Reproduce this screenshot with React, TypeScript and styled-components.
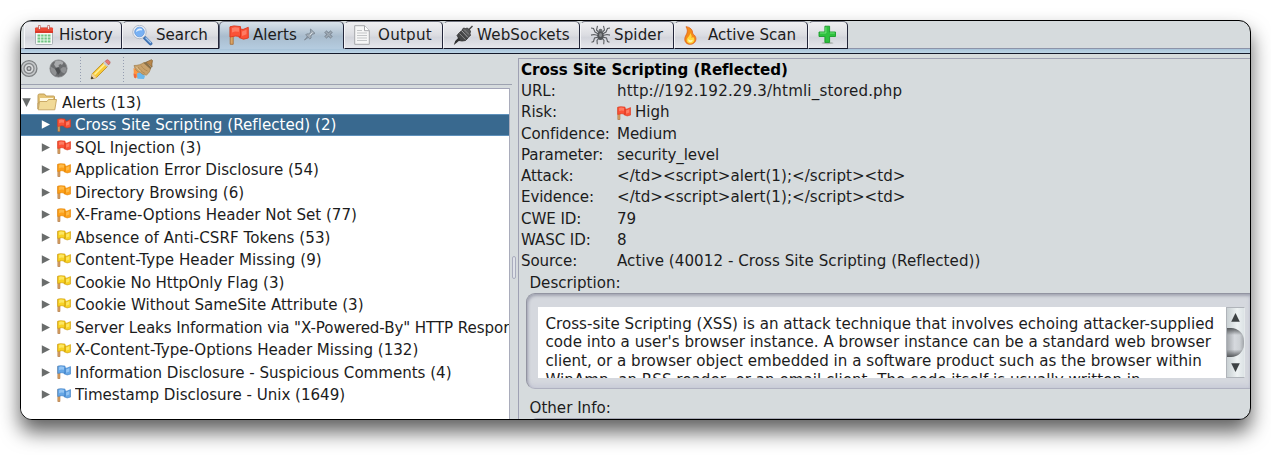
import React from 'react';
import styled, { createGlobalStyle } from 'styled-components';

const Global = createGlobalStyle`
  * { box-sizing: border-box; }
  body { margin: 0; background: #fff; overflow: hidden; }
`;

const Page = styled.div`
  width: 1271px;
  height: 455px;
  padding: 20px;
  overflow: hidden;
  font-family: "DejaVu Sans", sans-serif;
  font-size: 15.1px;
  color: #1c1c1c;
  white-space: nowrap;
`;
const Window = styled.div`
  width: 1231px;
  height: 400px;
  border: 1px solid #000;
  border-radius: 12px;
  overflow: hidden;
  background: #d6dbdd;
  display: flex;
  flex-direction: column;
  box-shadow: 0 12px 20px rgba(0, 0, 0, 0.62);
`;
const TabBar = styled.div`
  height: 28px;
  flex: none;
  display: flex;
  padding-left: 3px;
  border-bottom: 1px solid #8d93a8;
`;
const Tab = styled.div<{ $w: number; $active?: boolean; $spacing?: number }>`
  width: ${p => p.$w}px;
  height: 28px;
  flex: none;
  display: flex;
  align-items: center;
  padding: 0 0 0 9px;
  letter-spacing: ${p => p.$spacing ?? 0}px;
  border: 1px solid #23263a;
  border-top-color: #70737f;
  border-left-color: ${p => (p.$active ? '#5c6478' : '#f4f5f8')};
  border-bottom-color: ${p => (p.$active ? '#b4cbdf' : '#15182a')};
  border-radius: 5px 5px 0 0;
  background: ${p => (p.$active
    ? 'linear-gradient(#d9e2ea, #a9bccd 55%, #b4cbdf)'
    : 'linear-gradient(#efeff1, #dcdde2 50%, #d3d5dc 60%, #e6e7ec)')};
`;
const TabIcon = styled.span<{ $w: number }>`
  width: ${p => p.$w}px;
  height: 22px;
  flex: none;
  display: flex;
  align-items: center;
`;
const Strip = styled.div`
  height: 5px;
  flex: none;
  background: linear-gradient(#a7c3d9, #bdd5e6);
  border-bottom: 1px solid #14192a;
`;
const Body = styled.div`
  flex: 1;
  min-height: 0;
  display: flex;
`;
const Left = styled.div`
  width: 491px;
  flex: none;
  display: flex;
  flex-direction: column;
`;
const Toolbar = styled.div`
  height: 31px;
  flex: none;
  display: flex;
  align-items: center;
  border-bottom: 1px solid #9da2b0;
`;
const Tool = styled.span<{ $ml: number }>`
  margin-left: ${p => p.$ml}px;
  height: 20px;
  display: flex;
`;
const Dots = styled.span<{ $ml: number }>`
  margin-left: ${p => p.$ml}px;
  width: 1px;
  height: 25px;
  background: repeating-linear-gradient(#959db0 0 1px, transparent 1px 3px);
`;
const Tree = styled.div`
  margin-top: 3px;
  width: 489px;
  flex: 1;
  min-height: 0;
  background: #fff;
  border-top: 1px solid #a3a5b8;
  border-right: 1px solid #a9acbb;
  padding-top: 2px;
  overflow: hidden;
`;
const Row = styled.div<{ $selected?: boolean; $root?: boolean }>`
  height: 22.5px;
  display: flex;
  align-items: center;
  padding-left: ${p => (p.$root ? 1 : 20)}px;
  color: ${p => (p.$selected ? '#fff' : '#1c1c1c')};
  background: ${p => (p.$selected ? '#39698f' : 'transparent')};
  box-shadow: ${p => (p.$selected ? 'inset 0 1px #5f91bb, inset 0 -1px #5f91bb' : 'none')};
  svg { flex: none; }
`;
const RowText = styled.span<{ $spacing?: number }>`
  padding-top: 1px;
  flex: 1;
  min-width: 0;
  overflow: hidden;
  letter-spacing: ${p => p.$spacing ?? -0.02}px;
`;
const RowFlag = styled.span`
  margin: 0 4px 0 7px;
  height: 14px;
  display: flex;
`;
const Folder = styled.span`
  margin: 0 5px 0 6px;
  display: flex;
`;
const Splitter = styled.div`
  width: 6px;
  flex: none;
  padding-top: 202px;
`;
const Handle = styled.div`
  width: 4px;
  height: 23px;
  border: 1px solid #a9acbd;
  border-radius: 2px;
  background: #dfe2e8;
`;
const Details = styled.div`
  flex: 1;
  min-width: 0;
  margin-top: 4px;
  border-left: 1px solid #9fa1b3;
  border-top: 1px solid #9fa1b3;
  padding: 1px 0 0 2px;
  overflow: hidden;
`;
const Title = styled.div`
  height: 21.25px;
  line-height: 21px;
  font-weight: bold;
  letter-spacing: -0.04px;
  color: #000;
`;
const Field = styled.div<{ $spacing?: number }>`
  height: 21.25px;
  line-height: 21.5px;
  display: flex;
  align-items: center;
  letter-spacing: ${p => p.$spacing ?? 0}px;
`;
const Label = styled.span`
  width: 96px;
  flex: none;
  letter-spacing: -0.1px;
`;
const SmallFlag = styled.span`
  margin-right: 4px;
  display: flex;
`;
const Caption = styled.div<{ $mt?: number }>`
  height: 20px;
  line-height: 20px;
  margin-top: ${p => p.$mt ?? 0}px;
  padding-left: 8.5px;
`;
const Group = styled.div`
  height: 96px;
  margin-left: 5px;
  border: 1px solid #9294a1;
  border-right: 0;
  border-bottom-color: #afb1c0;
  border-radius: 9px 0 0 9px;
  box-shadow: inset 1px 2px 3px rgba(90, 92, 115, 0.4), inset 0 -3px 4px rgba(150, 150, 190, 0.18);
  background: #d5d8de;
  padding: 13px 5px 9px 11px;
  display: flex;
`;
const TextArea = styled.div`
  flex: 1;
  min-width: 0;
  height: 71px;
  overflow: hidden;
  background: #fff;
  padding: 8px 0 0 7.5px;
  line-height: 18.7px;
  letter-spacing: 0.015px;
`;
const ScrollBar = styled.div`
  width: 19px;
  height: 71px;
  border: 1px solid #b0b4ba;
  border-right-color: #e5e9eb;
  background: linear-gradient(90deg, #c9d0d3, #eef2f3 60%, #dce3e5);
  display: flex;
  flex-direction: column;
  align-items: center;
  justify-content: space-between;
  padding: 5px 0;
`;
const Thumb = styled.div`
  width: 17px;
  height: 29px;
  border-radius: 0 13px 13px 0;
  background:
    linear-gradient(#54575a, transparent 24%, transparent 74%, #54575a),
    linear-gradient(90deg, #a4a8ac, #d6d9de 45%, #ccd0d4 75%, #a0a4a8);
`;
const OtherGroup = styled.div`
  margin-left: 9px;
  height: 8px;
  border-top: 2px solid #a7a9b5;
  border-radius: 7px 0 0 0;
`;

const Flag = ({ c, size = 14 }: { c: string; size?: number }) => {
  const tones: Record<string, [string, string, string]> = {
    red: ['#ff8f78', '#fb5237', '#df3a20'],
    orange: ['#ffc65c', '#fda01a', '#e58604'],
    yellow: ['#fff07c', '#f8d223', '#cf9c08'],
    blue: ['#a9d2f8', '#66a7e6', '#3f80c6'],
  };
  const [light, mid, dark] = tones[c];
  return (
    <svg width={size} height={size} viewBox="0 0 20 20">
      <path d="M1.200 2h3v17.300h-3z" fill="#dba566" stroke="#a4672f" strokeWidth=".8" />
      <path d="M10 3.500 14 4.500 19.300 2.300V13L14.500 14.200 10 12.500z" fill={mid} stroke={dark} strokeWidth=".9" />
      <path d="M1 1.800 5 .9 11.500 1.600V11.500L6.500 11 1 12z" fill={mid} stroke={dark} strokeWidth=".9" />
      <path d="M3 3 6 2.200l4 .5v4L6 6.500 3 7.500zM13 6.500l4.500-1.700v4.500L13 11z" fill={light} opacity=".7" />
      <path d="M11.500 4.500v8" stroke={dark} strokeWidth="1" />
    </svg>
  );
};

const CalendarIcon = () => (
  <svg width="20" height="20" viewBox="0 0 20 20">
    <rect x="1.500" y="3" width="17" height="16.500" rx="1" fill="#f7f9f7" stroke="#a9b0b5" />
    <path d="M1 8V3.500Q1 2.500 2 2.500h16q1 0 1 1V8z" fill="#ee4934" />
    <path d="M1 7h18" stroke="#c62d1e" />
    <path d="M4.500.5h1.800v4H4.500zM13.700.5h1.800v4h-1.800z" fill="#fff" stroke="#b0372b" strokeWidth=".6" />
    <path d="M3.500 9.500h13v8h-13z" fill="#72c684" />
    <path d="M3 12h14M3 15h14M6.700 9v9M10 9v9M13.300 9v9" stroke="#eefaf0" strokeWidth=".9" />
  </svg>
);
const SearchIcon = () => (
  <svg width="21" height="21" viewBox="0 0 21 21">
    <path d="m13 13 5.500 5.500" stroke="#3f72b3" strokeWidth="3.800" strokeLinecap="round" />
    <path d="m14 13 4.500 4.500" stroke="#a3c7ee" strokeWidth="1.400" strokeLinecap="round" />
    <circle cx="7.500" cy="7" r="5.700" fill="#78b1f4" stroke="#f4f6fa" strokeWidth="1.800" />
    <circle cx="7.500" cy="7" r="6.700" fill="none" stroke="#9aa6b7" strokeWidth=".7" />
    <circle cx="7.500" cy="7" r="4.900" fill="none" stroke="#5a8ed2" strokeWidth=".7" />
    <path d="M4 7c.2-2 2-3.500 4-3.500s2.500 1 2 2c-2-.4-4 .1-6 1.500z" fill="#e2f1ff" />
  </svg>
);
const PinIcon = () => (
  <svg width="13" height="13" viewBox="0 0 13 13">
    <path d="m7.500 1 4.500 4.300-1.200.7-.9-.2-2 2.200.2 2-1.200 1L2.700 7l1-1.100 2 .1 2-2-.3-1zM4.300 8.700l.8.8L1.500 12z" fill="#a3adb7" stroke="#7c8894" strokeWidth=".9" />
    <path d="m6.800 7.200 2.700-2.700" stroke="#dbe2e8" strokeWidth="1" />
  </svg>
);
const CloseIcon = () => (
  <svg width="11" height="11" viewBox="0 0 11 11">
    <path d="m2.300 2.300 6.400 6.400m0-6.400L2.300 8.700" stroke="#7f8b98" strokeWidth="3.200" />
    <path d="m2.500 2.500 6 6m0-6-6 6" stroke="#a0abb5" strokeWidth="1.200" />
  </svg>
);
const DocIcon = () => (
  <svg width="16" height="20" viewBox="0 0 16 20">
    <path d="M.7.7h9.800l4.800 5v13.600H.7z" fill="#f6f6f6" stroke="#a5a7aa" />
    <path d="M10.500.7v5h4.800" fill="#fff" stroke="#a5a7aa" />
    <path d="M3 5.500h5M3 8h10M3 10.500h10M3 13h10M3 15.500h10" stroke="#c3c5c7" />
  </svg>
);
const PlugIcon = () => (
  <svg width="21" height="21" viewBox="0 0 21 21">
    <path d="m14.500 6 5-5" stroke="#444" strokeWidth="1.500" />
    <path d="M5 12 4 10.500l2.500-3L9 5.500l6.500 7-3 3-3.500.5-3-.5z" fill="#454647" stroke="#2c2c2c" strokeWidth=".8" />
    <path d="m9 5 1.500-2 2 .5L14.500 3l3 3-.5 2.500.5 2L15.500 12z" fill="#58595a" stroke="#343434" strokeWidth=".8" />
    <path d="m6.500 8.500 6 6.200M11 4.500l5 5" stroke="#8d8d8d" strokeWidth=".9" />
    <path d="M8.500 5.500 15 12.500" stroke="#d0d0d2" strokeWidth=".7" />
    <path d="m.8 20 1.400-4 3.500-3.500 1.800 2-3.500 3z" fill="#303030" />
  </svg>
);
const SpiderIcon = () => (
  <svg width="21" height="20" viewBox="0 0 21 20">
    <g fill="none" stroke="#5b5e62" strokeWidth="1.100">
      <path d="M9 7.500 6.500 5 7.500.8M12 7.500 14.500 5l-1-4.200M8.500 9 5 7 3.500 3.500 1 3M12.500 9 16 7l1.500-3.500 2.500-.5M8 10.500l-4-1-3 .6M13 10.500l4-1 3 .6M8.500 12 4.500 13l-1 3.500-2 .7M12.500 12l4 1 1 3.500 2 .7M9 13l-2 2.500.3 3.700M12 13l2 2.500-.3 3.700" />
    </g>
    <circle cx="10.500" cy="5.800" r="2" fill="#6c6f72" />
    <ellipse cx="10.500" cy="10.800" rx="3.200" ry="4.300" fill="#515457" />
    <ellipse cx="10.500" cy="10" rx="1.500" ry="2.100" fill="#8a8d90" />
  </svg>
);
const FlameIcon = () => (
  <svg width="13" height="19" viewBox="0 0 13 19">
    <path d="M2 .7C6 1 9 4 8.500 7.200c.6 1 2.500 2 3.200 4.300C12.700 15 10 18.300 6.200 18.300S.6 15.800.8 12.700C1 9 5.500 6.500 2 .7z" fill="#f58b18" stroke="#e0621a" strokeWidth=".8" />
    <path d="M6 7c.5 3-3.300 4.300-3.300 7.200 0 2 1.600 3.200 3.500 3.200 2.600 0 4.300-1.700 4.100-4-.1-1.200-.8-2.200-1.500-2.600-.3.900-.7 1.200-1.300 1.200C8 10.500 7.500 8.500 6 7z" fill="#ffd941" />
    <path d="M4.500 13c-.8 1.800 0 3.300 1.700 3.300s2.600-1 2.500-2.500c-1.200.7-3.200.7-4.200-.8z" fill="#fff6b2" />
  </svg>
);
const PlusIcon = () => (
  <svg width="19" height="20" viewBox="0 0 19 20">
    <ellipse cx="9.500" cy="18" rx="6" ry="1.200" fill="#aeb4b1" />
    <path d="M6.900 1.200h4.700v5.800h5.900v4.500h-5.900v5.900H6.900v-5.900H1V7h5.900z" fill="#2fc13e" stroke="#1a9c2a" strokeWidth=".9" />
    <path d="M7.900 2.200V8H2M12 8h4.700" stroke="#71e47a" fill="none" />
  </svg>
);
const TargetIcon = () => (
  <svg width="17" height="19" viewBox="0 0 17 19">
    <circle cx="8" cy="9.500" r="7.900" fill="#c3c6c8" stroke="#7d8082" strokeWidth="1.300" />
    <circle cx="8" cy="9.500" r="5" fill="#d8dadb" stroke="#86898b" strokeWidth="1.300" />
    <circle cx="8" cy="9.500" r="1.900" fill="#c8cacb" stroke="#77797c" strokeWidth="1.300" />
  </svg>
);
const GlobeIcon = () => (
  <svg width="19" height="19" viewBox="0 0 19 19">
    <circle cx="9.500" cy="9.500" r="8.600" fill="#6c6e70" stroke="#858789" strokeWidth=".8" />
    <path d="M6.500 2c3-1.200 6-.2 8 1.700L13 6l-1.500-1-2 1 .5 1.700L7 8.500 5 5.500z" fill="#a9abad" />
    <path d="m11.500 10 2.500-2 3.300.5c.2 2.500-.5 4.500-2 6L12.500 13z" fill="#8f9193" />
    <path d="m1.500 7.500 4.300 2.500 2 3-1.200 3.500C3.500 16 1.300 12.500 1.500 7.500z" fill="#8f9193" />
    <path d="m6 9.500 4-1 1.500 4.500-2.500 3z" fill="#4d4f51" />
  </svg>
);
const PencilIcon = () => (
  <svg width="21" height="21" viewBox="0 0 21 21">
    <path d="m1 20 1.400-5.500L14 3l4 4L6.500 18.500z" fill="#f8ca35" stroke="#b8871e" strokeWidth=".8" />
    <path d="m4.500 15.500 11-11" stroke="#fff09a" strokeWidth="1.600" />
    <path d="m15 2.500 1.500-1.500q1-.7 2 .2l1.200 1.200q.8 1 .1 2L18.500 6z" fill="#e67973" stroke="#b14e49" strokeWidth=".6" />
    <path d="m13 4 4 4 1.500-1.500-4-4z" fill="#c9ccd0" />
    <path d="m1 20 1.400-5.500 4.100 4z" fill="#eed0a0" />
    <path d="m1 20 .6-2.700 2.100 2.100z" fill="#222" />
  </svg>
);
const BroomIcon = () => (
  <svg width="22" height="21" viewBox="0 0 22 21">
    <path d="M1.500 9 5 10.500l3 4-2 4.500-4-1z" fill="#ff9640" />
    <path d="M5 14.500 8 13l5 4-1 3-6.500-.3z" fill="#6bb9ee" />
    <path d="m1.500 14.500 3 1-.5 4-2-1z" fill="#f0683e" />
    <path d="M2 6.500C6 6.500 9 5.500 12 3.500l6.500 6c-.5 2.500-1.500 4.500-4 6.500-3 0-5-1-6-2.500-3.500-.5-5.500-3-6.500-7z" fill="#c9a26c" stroke="#a07f4e" strokeWidth=".7" />
    <path d="M6 8c1.500 2.500 4 5 7 6.500M9 6.500c1.500 2.500 4 4.500 6.500 5.500" stroke="#ab8550" strokeWidth=".8" fill="none" />
    <path d="M4.500 8c1.200 2 2.500 3.200 4 4" stroke="#e6c894" strokeWidth=".9" fill="none" />
    <path d="m11.500 4 7 6.200 1.200-1.700-6.400-5.800z" fill="#8a7048" />
    <path d="m14 3.200 2.200-1L19.500.7l1 .8-.6 3.500.2 3z" fill="#b9874b" stroke="#85602f" strokeWidth=".7" />
  </svg>
);
const FolderIcon = () => (
  <svg width="20" height="18" viewBox="0 0 20 18">
    <path d="M1 16V2.500Q1 1 2.500 1h5L9 3h7.500q1 0 1 1v6H1z" fill="#e5c578" stroke="#bb9750" strokeWidth=".9" />
    <path d="M3 5h13v5H3z" fill="#fff9e2" />
    <path d="M1.200 16.800 2.500 8.500H10L11.500 6.500h8L17.800 16.800z" fill="#f1da98" stroke="#c5a35d" strokeWidth=".9" />
  </svg>
);
const Arrow = ({ dir, fill = '#6a6d6c' }: { dir: 'right' | 'down' | 'up'; fill?: string }) => (
  <svg width="9" height="9" viewBox="0 0 9 9">
    <path d={dir === 'right' ? 'M.8.3v8.400L9 4.500z' : dir === 'down' ? 'M.2.3h8.600L4.500 9z' : 'M.2 8.700h8.600L4.500 0z'} fill={fill} />
  </svg>
);

const alerts: [string, string, number?][] = [
  ['red', 'Cross Site Scripting (Reflected) (2)', 0.02],
  ['red', 'SQL Injection (3)', 0.05],
  ['orange', 'Application Error Disclosure (54)'],
  ['orange', 'Directory Browsing (6)'],
  ['orange', 'X-Frame-Options Header Not Set (77)'],
  ['yellow', 'Absence of Anti-CSRF Tokens (53)', 0.03],
  ['yellow', 'Content-Type Header Missing (9)', 0.03],
  ['yellow', 'Cookie No HttpOnly Flag (3)', -0.08],
  ['yellow', 'Cookie Without SameSite Attribute (3)'],
  ['yellow', 'Server Leaks Information via "X-Powered-By" HTTP Respor', -0.09],
  ['yellow', 'X-Content-Type-Options Header Missing (132)'],
  ['blue', 'Information Disclosure - Suspicious Comments (4)', -0.03],
  ['blue', 'Timestamp Disclosure - Unix (1649)'],
];
const fields: [string, string, number?][] = [
  ['URL:', 'http://192.192.29.3/htmli_stored.php', 0.16],
  ['Risk:', 'High'],
  ['Confidence:', 'Medium', -0.1],
  ['Parameter:', 'security_level', -0.12],
  ['Attack:', '</td><script>alert(1);</script><td>', 0.02],
  ['Evidence:', '</td><script>alert(1);</script><td>', 0.02],
  ['CWE ID:', '79'],
  ['WASC ID:', '8'],
  ['Source:', 'Active (40012 - Cross Site Scripting (Reflected))', 0.05],
];
const description = [
  'Cross-site Scripting (XSS) is an attack technique that involves echoing attacker-supplied',
  "code into a user's browser instance. A browser instance can be a standard web browser",
  'client, or a browser object embedded in a software product such as the browser within',
  'WinAmp, an RSS reader, or an email client. The code itself is usually written in',
];

const TabExtras = styled.span`
  display: flex;
  align-items: center;
  gap: 7px;
  margin-left: 6px;
  padding-bottom: 2px;
`;

export default function App() {
  return (
    <Page>
      <Global />
      <Window>
        <TabBar>
          <Tab $w={98}><TabIcon $w={25}><CalendarIcon /></TabIcon>History</Tab>
          <Tab $w={97}><TabIcon $w={24}><SearchIcon /></TabIcon>Search</Tab>
          <Tab $w={125} $active>
            <TabIcon $w={24}><Flag c="red" size={20} /></TabIcon>Alerts
            <TabExtras><PinIcon /><CloseIcon /></TabExtras>
          </Tab>
          <Tab $w={99} $spacing={0.25}><TabIcon $w={24}><DocIcon /></TabIcon>Output</Tab>
          <Tab $w={137} $spacing={0.15}><TabIcon $w={24}><PlugIcon /></TabIcon>WebSockets</Tab>
          <Tab $w={94} $spacing={0.1}><TabIcon $w={24}><SpiderIcon /></TabIcon>Spider</Tab>
          <Tab $w={134}><TabIcon $w={24}><FlameIcon /></TabIcon>Active Scan</Tab>
          <Tab $w={40}><TabIcon $w={19}><PlusIcon /></TabIcon></Tab>
        </TabBar>
        <Strip />
        <Body>
          <Left>
            <Toolbar>
              <Tool $ml={0}><TargetIcon /></Tool>
              <Tool $ml={11}><GlobeIcon /></Tool>
              <Dots $ml={12} />
              <Tool $ml={9}><PencilIcon /></Tool>
              <Dots $ml={12} />
              <Tool $ml={8}><BroomIcon /></Tool>
            </Toolbar>
            <Tree>
              <Row $root><Arrow dir="down" /><Folder><FolderIcon /></Folder><RowText>Alerts (13)</RowText></Row>
              {alerts.map(([c, text, spacing], i) => (
                <Row key={text} $selected={i === 0}>
                  <Arrow dir="right" fill={i === 0 ? '#fff' : undefined} />
                  <RowFlag><Flag c={c} /></RowFlag>
                  <RowText $spacing={spacing}>{text}</RowText>
                </Row>
              ))}
            </Tree>
          </Left>
          <Splitter><Handle /></Splitter>
          <Details>
            <Title>Cross Site Scripting (Reflected)</Title>
            {fields.map(([label, value, spacing]) => (
              <Field key={label} $spacing={spacing}>
                <Label>{label}</Label>
                {label === 'Risk:' && <SmallFlag><Flag c="red" /></SmallFlag>}
                {value}
              </Field>
            ))}
            <Caption>Description:</Caption>
            <Group>
              <TextArea>{description.map(line => <div key={line}>{line}</div>)}</TextArea>
              <ScrollBar>
                <Arrow dir="up" fill="#3e4244" />
                <Thumb />
                <Arrow dir="down" fill="#3e4244" />
              </ScrollBar>
            </Group>
            <Caption $mt={9}>Other Info:</Caption>
            <OtherGroup />
          </Details>
        </Body>
      </Window>
    </Page>
  );
}
